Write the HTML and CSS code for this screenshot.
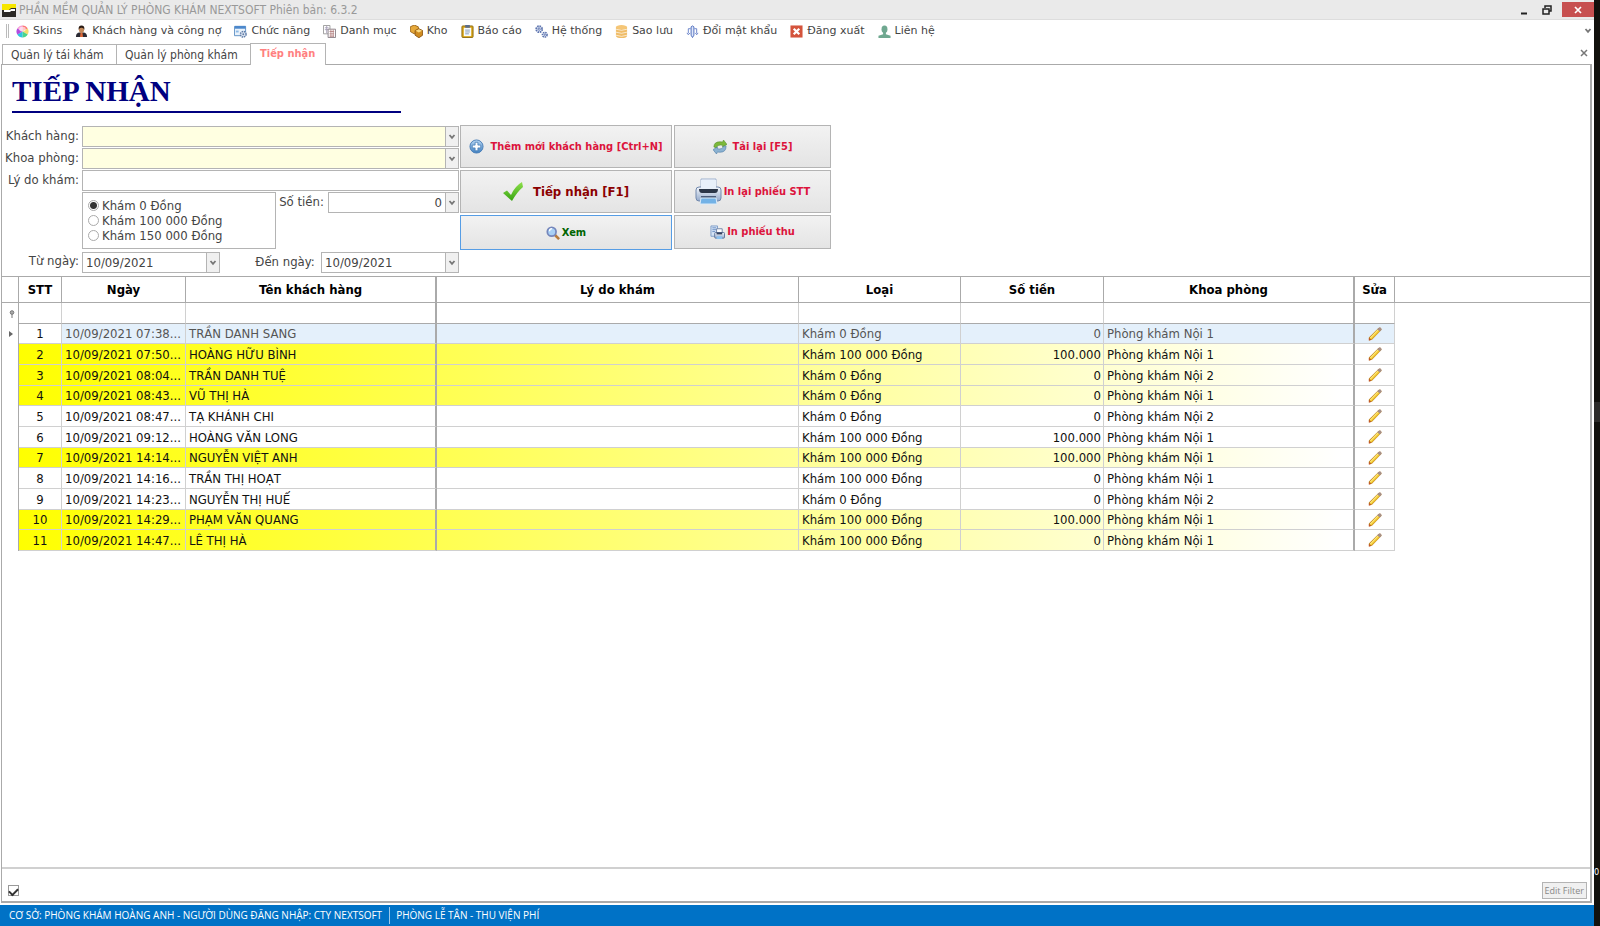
FILE: index.html
```
<!DOCTYPE html>
<html lang="vi">
  <head>
    <meta charset="utf-8">
    <title>Tiếp nhận</title>
    <link rel="stylesheet" href="styles.css">
  </head>
  <body>
    <svg class="defs" width="0" height="0">
      <symbol id="pencil" viewBox="0 0 16 16">
        <path d="M1 15.500V12L12 1q3-1.500 3.500 2L4.500 14.500z" fill="#b87a1c"/>
        <path d="M1.800 12.500L11.800 2.200l2.600 1.800L4 14.200z" fill="#f0c632"/>
        <path d="M2 12.200L11.500 2.400l1 .8L3 13z" fill="#ffe97a"/>
        <path d="M12 1q3-1.500 3.500 2L13.500 5 10.500 2.600z" fill="#a58f8a"/>
        <path d="M1 15.500V12.500L3.500 14.800z" fill="#c4502a"/>
      </symbol>
      <symbol id="down" viewBox="0 0 8 8"><path d="M1.500 2L4 4.800 6.500 2" fill="none" stroke="#777" stroke-width="1.800"/></symbol>
      <linearGradient id="blue" x2="0" y2="1"><stop stop-color="#b9d8f4"/><stop offset="1" stop-color="#3f7fc0"/></linearGradient>
      <linearGradient id="green" x2="0" y2="1"><stop stop-color="#8fe04c"/><stop offset="1" stop-color="#35a310"/></linearGradient>
      <linearGradient id="metal" x2="0" y2="1"><stop stop-color="#f4f7fc"/><stop offset="1" stop-color="#93a9cb"/></linearGradient>
    </svg>
    <div class="app">
      <header class="titlebar">
        <svg width="14" height="14" viewBox="0 0 14 14"><path d="M0 1h14v13H0z" fill="#2c2926"/><path d="M0 1h14v4H9L7 7H0z" fill="#f7e600"/><path d="M2 7h6l1-1h4v2H9L8 9H2z" fill="#fff"/></svg>
        <span class="caption">PHẦN MỀM QUẢN LÝ PHÒNG KHÁM NEXTSOFT Phiên bản: 6.3.2</span>
        <button class="winbtn" aria-label="Minimize"><svg width="10" height="10"><path d="M2 8.500h6" stroke="#222" stroke-width="2"/></svg></button>
        <button class="winbtn" aria-label="Restore"><svg width="10" height="10"><path d="M3 3V1h6v5H7M1 4h6v5H1z" fill="none" stroke="#222" stroke-width="1.500"/></svg></button>
        <button class="winbtn close" aria-label="Close"><svg width="8" height="8"><path d="M1 1l6 6M7 1L1 7" stroke="#fff" stroke-width="1.700"/></svg></button>
      </header>
      <nav class="menu">
        <i class="grip"></i>
        <a href="#"><svg viewBox="0 0 14 14"><circle cx="7" cy="7" r="6.500" fill="#eee"/><path d="M7 7V.5A6.500 6.500 0 0 0 1.400 3.800z" fill="#f8a0d8"/><path d="M7 7V.5A6.500 6.500 0 0 1 12.600 3.800z" fill="#f77"/><path d="M7 7l5.600-3.200a6.500 6.500 0 0 1 0 6.400z" fill="#f5dc6a"/><path d="M7 7l5.600 3.200A6.500 6.500 0 0 1 7 13.500z" fill="#4bd58a"/><path d="M7 7v6.500a6.500 6.500 0 0 1-5.600-3.300z" fill="#2fc4e0"/><path d="M7 7l-5.600 3.200a6.500 6.500 0 0 1 0-6.400z" fill="#b24be0"/><ellipse cx="7" cy="4.500" rx="3.500" ry="2.500" fill="#fff" opacity=".6"/></svg>Skins</a>
        <a href="#"><svg viewBox="0 0 14 14"><path d="M1 13q0-5 4-5h4q4 0 4 5z" fill="#2b2a33"/><path d="M6 8h2l.6 5H5.400z" fill="#e06a3a"/><ellipse cx="7" cy="4.800" rx="2.800" ry="3.600" fill="#c48a5c"/><path d="M3.900 5Q3.500.5 7 .5T10.100 5Q9 2.800 7 3 5 2.800 3.900 5z" fill="#2a1b14"/></svg>Khách hàng và công nợ</a>
        <a href="#"><svg viewBox="0 0 14 14"><path d="M.5 1.500h12v10H.5z" fill="#e9f2fb" stroke="#5c8fc4"/><path d="M1 1h11.500v3H1z" fill="#4c88cc"/><path d="M2 6h3v2H2z" fill="#8db9e4"/><circle cx="10" cy="10" r="3" fill="#dfe7f2" stroke="#617da8" stroke-width="1.500" stroke-dasharray="1.600 .8"/><circle cx="10" cy="10" r="1" fill="#617da8"/></svg>Chức năng</a>
        <a href="#"><svg viewBox="0 0 14 14"><path d="M.5.5h7v9h-7z" fill="#fff" stroke="#999"/><path d="M2 3h4M2 5h4M4 1v8" stroke="#a7a0b8"/><path d="M5.500 4.500h8v9h-8z" fill="#fff" stroke="#887f86"/><path d="M7 7h5M7 9.500h5M7 12h5M8.500 5v8M11 5v8" stroke="#b98787"/></svg>Danh mục</a>
        <a href="#"><svg viewBox="0 0 14 14"><path d="M4.500 0L9 2v5L4.500 9.500.3 7V2z" fill="#e6a93a" stroke="#9c661a"/><path d="M9.500 4L13.600 6v5l-4 2.700L5.500 11V6z" fill="#d08c20" stroke="#8c5814"/><path d="M9.500 4.500L13 6.200 9.500 8 6 6.200z" fill="#fadb86"/></svg>Kho</a>
        <a href="#"><svg viewBox="0 0 14 14"><rect x="1" y="1" width="12" height="12.500" rx="1" fill="#d9a514" stroke="#8a6a12"/><path d="M3 3h8v9H3z" fill="#f6fafd"/><path d="M4.500 0h5v3h-5z" fill="#5a6c8c"/><path d="M4.500 5.500h5M4.500 7.500h5M4.500 9.500h4" stroke="#8399b8"/></svg>Báo cáo</a>
        <a href="#"><svg viewBox="0 0 14 14" fill="#e8eefa" stroke="#5d74ae"><circle cx="4.500" cy="4.500" r="3.200" stroke-width="2" stroke-dasharray="1.700 .8"/><circle cx="4.500" cy="4.500" r="1.200"/><circle cx="10.500" cy="10.500" r="2.500" stroke-width="1.700" stroke-dasharray="1.500 .7"/><circle cx="10.500" cy="10.500" r=".7"/></svg>Hệ thống</a>
        <a href="#"><svg viewBox="0 0 14 14"><path d="M1 2v9.500q0 2.500 6 2.500t6-2.500V2z" fill="#f0bd68"/><ellipse cx="7" cy="2.300" rx="6" ry="2.300" fill="#f5c677"/><path d="M1 4.500q6 2.500 12 0M1 7.700q6 2.500 12 0M1 11q6 2.500 12 0" fill="none" stroke="#fff" stroke-width=".7"/></svg>Sao lưu</a>
        <a href="#"><svg viewBox="0 0 14 14"><path d="M5.500 2q1.500-2 3 0v9L7 13.500 5.500 11z" fill="#dfe8fa" stroke="#4a68bc"/><path d="M5 4H2.500v5M9 4h2.500v5M1 8.500l1.500 2 2-2M10 8.500l1.500 2 1.500-2" fill="none" stroke="#6680c8"/></svg>Đổi mật khẩu</a>
        <a href="#"><svg viewBox="0 0 14 14"><path d="M.5.5h13v13H.5z" fill="#d4543c"/><path d="M4 4l6 6M10 4l-6 6" stroke="#fff" stroke-width="2.400"/></svg>Đăng xuất</a>
        <a href="#"><svg viewBox="0 0 14 14" fill="#6fa890"><ellipse cx="7" cy="4.500" rx="3.200" ry="4"/><path d="M5.500 7h3v3l5 1.500V14H.5v-2.500l5-1.500z"/></svg>Liên hệ</a>
        <button class="more" aria-label="Thêm"><svg width="8" height="8"><use href="#down"/></svg></button>
      </nav>
      <div class="tabs">
        <a class="tab" href="#">Quản lý tái khám</a>
        <a class="tab wide" href="#">Quản lý phòng khám</a>
        <a class="tab active" href="#">Tiếp nhận</a>
        <button class="tabclose" aria-label="Đóng"><svg width="8" height="8"><path d="M1 1l6 6M7 1L1 7" stroke="#777" stroke-width="1.500"/></svg></button>
      </div>
      <main class="panel">
        <h1>TIẾP NHẬN</h1>
        <form class="entry">
          <div class="fields">
            <label for="kh">Khách hàng:</label>
            <div class="combo required"><select id="kh"><option></option></select><span class="arrow"><svg><use href="#down"/></svg></span></div>
            <label for="kp">Khoa phòng:</label>
            <div class="combo required"><select id="kp"><option></option></select><span class="arrow"><svg><use href="#down"/></svg></span></div>
            <label for="ld">Lý do khám:</label>
            <div class="combo"><input id="ld" type="text"></div>
            <div class="fee">
              <fieldset>
                <label><input type="radio" name="loai" checked>Khám 0 Đồng</label>
                <label><input type="radio" name="loai">Khám 100 000 Đồng</label>
                <label><input type="radio" name="loai">Khám 150 000 Đồng</label>
              </fieldset>
              <label for="st">Số tiền:</label>
              <div class="combo money"><input id="st" type="text" value="0"><button type="button" class="arrow" aria-label="Chọn"><svg><use href="#down"/></svg></button></div>
            </div>
            <label for="tu">Từ ngày:</label>
            <div class="dates">
              <div class="combo date"><input id="tu" type="text" value="10/09/2021"><button type="button" class="arrow" aria-label="Chọn"><svg><use href="#down"/></svg></button></div>
              <label for="den">Đến ngày:</label>
              <div class="combo date"><input id="den" type="text" value="10/09/2021"><button type="button" class="arrow" aria-label="Chọn"><svg><use href="#down"/></svg></button></div>
            </div>
          </div>
          <div class="actions">
            <button type="button" class="spaced"><svg width="15" height="15" viewBox="0 0 16 16"><circle cx="8" cy="8" r="7" fill="url(#blue)" stroke="#4b7fb8"/><path d="M6.500 3.500h3v3h3v3h-3v3h-3v-3h-3v-3h3z" fill="#fff" stroke="#4179b4" stroke-width=".8"/></svg>Thêm mới khách hàng [Ctrl+N]</button>
            <button type="button" class="spaced"><svg width="14" height="14" viewBox="0 0 16 16"><path d="M1 8q0-6 7-6l3 .2L12 0l4 5-5 3V6Q5 5 4 9z" fill="#7cb83a" stroke="#4f8a22" stroke-width=".6"/><path d="M15 7q0 7-7 7l-3-.2L4 16 0 11l5-3v2q6 1 7-3z" fill="#8bb2d2" stroke="#41719e" stroke-width=".6"/></svg>Tải lại [F5]</button>
            <button type="button" class="spaced main"><svg width="21" height="20" viewBox="0 0 21 20"><path d="M0 11l4-2.500 4 4.500Q12 4 19 0l1 5Q14 10 9 19z" fill="url(#green)"/></svg>Tiếp nhận [F1]</button>
            <button type="button"><svg width="27" height="27" viewBox="0 0 27 27"><path d="M6 1h15v12H6z" fill="#f8fbff" stroke="#9fb2cf"/><rect x="1" y="9" width="25" height="14" rx="3" fill="url(#metal)" stroke="#7289ad"/><path d="M6 2h15v9H6z" fill="#e8f0fa"/><path d="M4 11h19q0 4-3 4H7q-3 0-3-4z" fill="#2b3648"/><path d="M6 18h15v3H6z" fill="#4b5d7b"/><path d="M6 20h15l1 6H5z" fill="#73b2e6" stroke="#dcebf8"/></svg>In lại phiếu STT</button>
            <button type="button" class="view"><svg width="14" height="14" viewBox="0 0 16 16"><path d="M10 10l5 5" stroke="#b77b3c" stroke-width="3"/><circle cx="6.500" cy="6.500" r="5" fill="#a8d0f5" stroke="#7586bb" stroke-width="2"/><path d="M4 6q0-3 3-3" fill="none" stroke="#fff" stroke-width="1.500"/></svg>Xem</button>
            <button type="button" class="low"><svg width="15" height="15" viewBox="0 0 16 16"><path d="M1 1h7v11H1z" fill="#d5e4f5" stroke="#7e9cc8"/><path d="M2.500 3h4M2.500 5h4M2.500 7h3" stroke="#6c8fc4"/><path d="M7 4h6v5H7z" fill="#fff" stroke="#7184a8"/><rect x="5" y="8" width="10.500" height="6" rx="1" fill="url(#metal)" stroke="#5c7199"/><path d="M7 8h6v2H7z" fill="#33415c"/><path d="M7 12h6v3H7z" fill="#8cc1ee"/></svg>In phiếu thu</button>
          </div>
        </form>
        <table class="grid">
          <colgroup><col class="c-mark"><col class="c-stt"><col class="c-date"><col class="c-name"><col class="c-reason"><col class="c-kind"><col class="c-money"><col class="c-room"><col class="c-edit"><col></colgroup>
          <thead>
            <tr><th></th><th>STT</th><th>Ngày</th><th>Tên khách hàng</th><th>Lý do khám</th><th>Loại</th><th>Số tiền</th><th>Khoa phòng</th><th>Sửa</th><th></th></tr>
          </thead>
          <tbody>
            <tr class="filter"><td><svg width="6" height="8"><circle cx="3" cy="2.500" r="1.800" fill="#aaa" stroke="#777"/><path d="M3 4v4" stroke="#777"/></svg></td><td></td><td></td><td></td><td></td><td></td><td></td><td></td><td></td><td></td></tr>
            <tr class="focused"><td><svg width="4" height="6"><path d="M0 0l4 3-4 3z" fill="#666"/></svg></td><td>1</td><td>10/09/2021 07:38...</td><td>TRẦN DANH SANG</td><td></td><td>Khám 0 Đồng</td><td>0</td><td>Phòng khám Nội 1</td><td><svg width="14" height="14"><use href="#pencil"/></svg></td><td></td></tr>
            <tr class="hot"><td></td><td>2</td><td>10/09/2021 07:50...</td><td>HOÀNG HỮU BÌNH</td><td></td><td>Khám 100 000 Đồng</td><td>100.000</td><td>Phòng khám Nội 1</td><td><svg width="14" height="14"><use href="#pencil"/></svg></td><td></td></tr>
            <tr class="hot"><td></td><td>3</td><td>10/09/2021 08:04...</td><td>TRẦN DANH TUỆ</td><td></td><td>Khám 0 Đồng</td><td>0</td><td>Phòng khám Nội 2</td><td><svg width="14" height="14"><use href="#pencil"/></svg></td><td></td></tr>
            <tr class="hot"><td></td><td>4</td><td>10/09/2021 08:43...</td><td>VŨ THỊ HÀ</td><td></td><td>Khám 0 Đồng</td><td>0</td><td>Phòng khám Nội 1</td><td><svg width="14" height="14"><use href="#pencil"/></svg></td><td></td></tr>
            <tr><td></td><td>5</td><td>10/09/2021 08:47...</td><td>TẠ KHÁNH CHI</td><td></td><td>Khám 0 Đồng</td><td>0</td><td>Phòng khám Nội 2</td><td><svg width="14" height="14"><use href="#pencil"/></svg></td><td></td></tr>
            <tr><td></td><td>6</td><td>10/09/2021 09:12...</td><td>HOÀNG VĂN LONG</td><td></td><td>Khám 100 000 Đồng</td><td>100.000</td><td>Phòng khám Nội 1</td><td><svg width="14" height="14"><use href="#pencil"/></svg></td><td></td></tr>
            <tr class="hot"><td></td><td>7</td><td>10/09/2021 14:14...</td><td>NGUYỄN VIỆT ANH</td><td></td><td>Khám 100 000 Đồng</td><td>100.000</td><td>Phòng khám Nội 1</td><td><svg width="14" height="14"><use href="#pencil"/></svg></td><td></td></tr>
            <tr><td></td><td>8</td><td>10/09/2021 14:16...</td><td>TRẦN THỊ HOẠT</td><td></td><td>Khám 100 000 Đồng</td><td>0</td><td>Phòng khám Nội 1</td><td><svg width="14" height="14"><use href="#pencil"/></svg></td><td></td></tr>
            <tr><td></td><td>9</td><td>10/09/2021 14:23...</td><td>NGUYỄN THỊ HUẾ</td><td></td><td>Khám 0 Đồng</td><td>0</td><td>Phòng khám Nội 2</td><td><svg width="14" height="14"><use href="#pencil"/></svg></td><td></td></tr>
            <tr class="hot"><td></td><td>10</td><td>10/09/2021 14:29...</td><td>PHẠM VĂN QUANG</td><td></td><td>Khám 100 000 Đồng</td><td>100.000</td><td>Phòng khám Nội 1</td><td><svg width="14" height="14"><use href="#pencil"/></svg></td><td></td></tr>
            <tr class="hot"><td></td><td>11</td><td>10/09/2021 14:47...</td><td>LÊ THỊ HÀ</td><td></td><td>Khám 100 000 Đồng</td><td>0</td><td>Phòng khám Nội 1</td><td><svg width="14" height="14"><use href="#pencil"/></svg></td><td></td></tr>
          </tbody>
        </table>
        <div class="filterbar">
          <input type="checkbox" checked aria-label="Bật bộ lọc">
          <button type="button">Edit Filter</button>
        </div>
      </main>
      <footer class="status">
        <span>CƠ SỞ: PHÒNG KHÁM HOÀNG ANH - NGƯỜI DÙNG ĐĂNG NHẬP: CTY NEXTSOFT</span>
        <span>PHÒNG LỄ TÂN - THU VIỆN PHÍ</span>
      </footer>
    </div>
    <aside class="edge"><i></i><span>0</span></aside>
  </body>
</html>
```
FILE: styles.css
```
* {box-sizing:border-box}
body {display:flex;margin:0;height:100vh;overflow:hidden;background:#fff;color:#444;font:13px/16px "DejaVu Sans Condensed","DejaVu Sans",sans-serif}
button, input, select {font:inherit;color:inherit;margin:0;border:0;padding:0;background:none;border-radius:0}
a {color:inherit;text-decoration:none}
svg {display:block;flex:none}
.defs {position:absolute}
.app {flex:1;min-width:0;display:flex;flex-direction:column}

/* window caption */
.titlebar {display:flex;align-items:center;height:20px;padding:0 0 0 2px;background:#eaeaea;border-bottom:1px solid #ddd;color:#999}
.caption {flex:1;margin-left:3px;font-size:12px;white-space:nowrap}
.winbtn {display:flex;align-items:center;justify-content:center;width:23px;height:15px}
.close {width:32px;margin-left:4px;background:#c75050}

/* main menu */
.menu {display:flex;align-items:center;gap:13px;height:22px;padding-left:6px;font:11px/16px "DejaVu Sans",sans-serif;white-space:nowrap}
.menu a {display:flex;align-items:center;gap:4px}
.menu a svg {width:13px;height:13px}
.grip {width:3px;height:14px;margin-right:-6px;border:solid #bbb;border-width:0 1px}
.more {margin-left:auto;padding-right:2px}

.tabs {display:flex;align-items:flex-end;height:22px;padding-left:2px;font-size:12px}
.tab {width:115px;height:20px;padding:2px 0 0 8px;border:1px solid #b4b4b4;border-width:1px 1px 0;white-space:nowrap}
.wide {width:135px;margin-left:-1px}
.active {width:76px;height:22px;margin:0 0 -1px -1px;padding-left:9px;background:#fff;color:#ff8080;font-weight:bold;font-size:11px;z-index:1}
.tabclose {margin:0 6px 7px auto}

.panel {flex:1;min-height:0;display:flex;flex-direction:column;margin:0 2px 2px 1px;border:solid #aaa;border-width:1px 2px 2px 1px}
h1 {width:389px;height:48px;margin:0 0 12px 10px;padding-top:9px;border-bottom:2px solid #000080;color:#000080;font:bold 29px/34px "Liberation Serif",serif}

/* entry form */
.entry {display:flex;gap:1px;height:151px}
.fields {display:grid;grid-template-columns:78px 377px;grid-template-rows:21px 21px 21px 58px 21px;gap:1px 2px;padding-top:1px}
.fields label {padding-right:1px;text-align:right;line-height:20px;white-space:nowrap}
.combo {display:flex;height:21px;border:1px solid #b4b4b4;background:#fff}
.combo input, .combo select {flex:1;min-width:0;padding:0 3px;appearance:none;outline:0}
.required {background:#ffffe1}
.arrow {display:flex;align-items:center;justify-content:center;width:13px;border-left:1px solid #b4b4b4;background:#f0f0f0}
.arrow svg {width:8px;height:8px}
.fee {grid-column:2;display:flex;justify-content:space-between;align-items:flex-start}
fieldset {display:flex;flex-direction:column;width:194px;height:57px;margin:0;padding:5px 0 0 5px;border:1px solid #b4b4b4}
.fields fieldset label {display:flex;align-items:center;gap:3px;line-height:15px}
[type=radio] {appearance:none;width:11px;height:11px;border:1px solid #aaa;border-radius:50%}
[type=radio]:checked {background:radial-gradient(#333 0 3px,#fff 4px)}
.money {width:131px}
.money input {text-align:right}
.dates {display:flex;justify-content:space-between;padding-top:1px;height:22px}
.date {width:138px}
.dates label {margin-left:30px}

.actions {display:grid;grid-template-columns:212px 157px;grid-template-rows:43px 43px 35px;gap:2px;align-content:start;font-size:11px;font-weight:bold;color:#dc143c}
.actions button {display:flex;align-items:center;justify-content:center;gap:2px;border:1px solid #b4b4b4;background:linear-gradient(#f2f2f2,#e4e4e4);white-space:nowrap}
.actions .spaced {gap:6px}
.actions .main {gap:9px;font-size:13px;color:#8b0000}
.actions .view {border-color:#569de5;color:#006400}
.actions .low {height:34px}

/* patient grid */
.grid {table-layout:fixed;width:100%;border-collapse:separate;border-spacing:0;border-top:1px solid #aaa;color:#111}
.c-mark {width:17px}
.c-stt {width:43px}
.c-date {width:124px}
.c-name {width:251px}
.c-reason {width:362px}
.c-kind {width:162px}
.c-money {width:143px}
.c-room {width:251px}
.c-edit {width:40px}
.grid th {height:26px;padding:0;border:solid #aaa;border-width:0 1px 1px 0;color:#000}
.grid td {height:20px;padding:0 3px;border:solid #d0d0d0;border-width:0 1px 1px 0;line-height:19px;white-space:nowrap}
.grid tbody tr:nth-child(3n+1) td, .grid tbody tr:nth-child(3n) td {height:21px}
.grid .filter td {border-bottom-color:#aaa}
.grid tr > :last-child {border-right:0}
.grid td:last-child {border:0}
.grid td:first-child {padding:0 0 0 7px;border-bottom:0;border-right-color:#aaa;background:#fff}
.grid td:nth-child(2) {text-align:center}
.grid tr > :nth-child(4), .grid tr > :nth-child(8) {border-right:2px solid #aaa}
.grid td:nth-child(7) {padding-right:2px;text-align:right}
.grid td:nth-child(9) svg {margin:auto}
.hot {background:linear-gradient(90deg,#ff0 17px,#fff 1340px)}
.focused td:nth-child(n+3):not(:last-child) {background:#e4f0fb;color:#555}

.filterbar {display:flex;align-items:flex-end;justify-content:space-between;height:34px;margin-top:auto;padding:0 3px 2px 6px;border-top:2px solid #d0d0d0}
.filterbar input {width:11px;height:11px;margin-bottom:3px;appearance:none;border:1px solid #999;display:grid;place-items:center}
.filterbar input:checked::before {content:"";width:7px;height:4px;border:solid #333;border-width:0 0 2px 2px;transform:rotate(-45deg)}
.filterbar button {height:17px;padding:0 2px;border:1px solid #b4b4b4;background:#f0f0f0;color:#888;font:9px/14px "Open Sans",sans-serif}

.status {display:flex;align-items:center;height:21px;padding-left:9px;background:#0072c6;color:#fff;font:10px/17px "Open Sans",sans-serif;white-space:nowrap}
.status span + span {margin-left:7px;padding-left:6px;border-left:1px solid #9cc8ea}

/* sliver of the second monitor */
.edge {width:6px;background:#12110d;color:#fff;font-size:9px}
.edge i {display:block;height:20px;margin-top:402px;background:#2d2c2a}
.edge span {display:block;margin-top:442px}
```
